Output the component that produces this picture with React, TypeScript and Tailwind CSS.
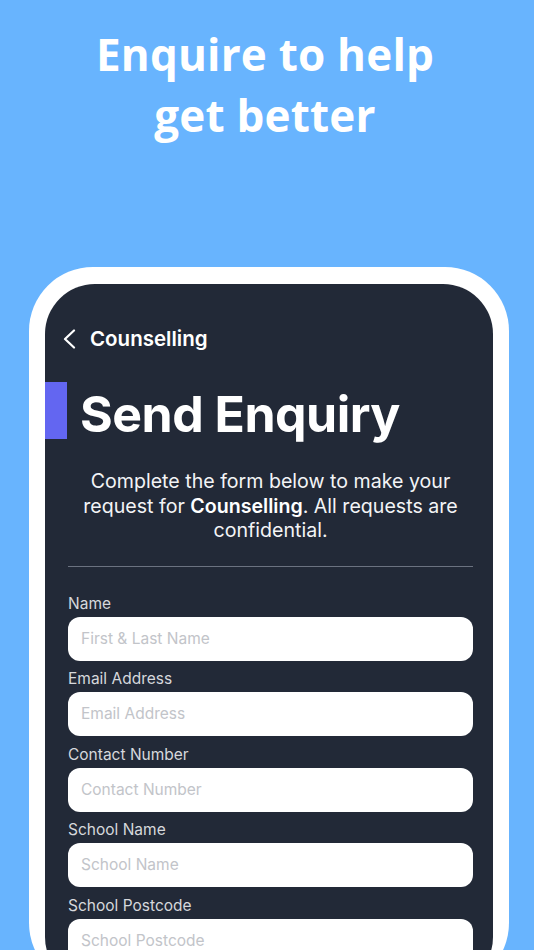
const fields = [
  { label: 'Name', placeholder: 'First & Last Name' },
  { label: 'Email Address', placeholder: 'Email Address' },
  { label: 'Contact Number', placeholder: 'Contact Number' },
  { label: 'School Name', placeholder: 'School Name' },
  { label: 'School Postcode', placeholder: 'School Postcode' },
];

function BackChevron() {
  return (
    <svg width="16" height="20" viewBox="0 0 16 20" fill="none" className="text-white">
      <path d="M12 1.5L3 10l9 8.5" stroke="currentColor" strokeWidth="2.2" strokeLinecap="round" strokeLinejoin="round" />
    </svg>
  );
}

export default function App() {
  return (
    <div className="w-[534px] h-[950px] overflow-hidden bg-[#68b4fe]">
      <h1 className="pt-[24px] pr-[4px] text-center text-white font-bold text-[44px] leading-[61px] font-['Open_Sans',sans-serif] tracking-[0.2px]">
        Enquire to help
        <br />
        get better
      </h1>

      <div className="ml-[29px] mt-[121px] w-[480px] h-[720px] bg-white rounded-[64px] pt-[17px] px-[16px]">
        <div className="h-full bg-[#222937] rounded-[50px] overflow-hidden font-['Inter',sans-serif] text-white">
          <div className="flex items-center pt-[42px] pl-[17px] h-[68px]">
            <BackChevron />
            <span className="ml-[12px] text-[20.5px] font-semibold">Counselling</span>
          </div>

          <div className="flex items-center mt-[30px] h-[57px]">
            <div className="w-[22px] h-full bg-[#6366f1]" />
            <span className="ml-[13px] mt-[8px] text-[50px] font-bold tracking-[-0.5px]">Send Enquiry</span>
          </div>

          <div className="pl-[23px] pr-[20px]">
            <p className="mt-[30px] text-center text-[19.6px] leading-[24.5px] text-[#f3f4f6]">
              Complete the form below to make your request for <b className="font-semibold text-white">Counselling</b>. All requests are confidential.
            </p>

            <div className="mt-[23px] h-px bg-[#6b7280]" />

            <div className="mt-[27px] flex flex-col">
              {fields.map((f) => (
                <div key={f.label} className="flex flex-col">
                  <label className="text-[15.5px] leading-[19px] text-[#d6d8dc]">{f.label}</label>
                  <div className="mt-[4px] mb-[8.5px] h-[44px] bg-white rounded-[12px] flex items-center px-[13px] text-[15.5px] text-[#c2c4c9]">
                    {f.placeholder}
                  </div>
                </div>
              ))}
            </div>
          </div>
        </div>
      </div>
    </div>
  );
}
